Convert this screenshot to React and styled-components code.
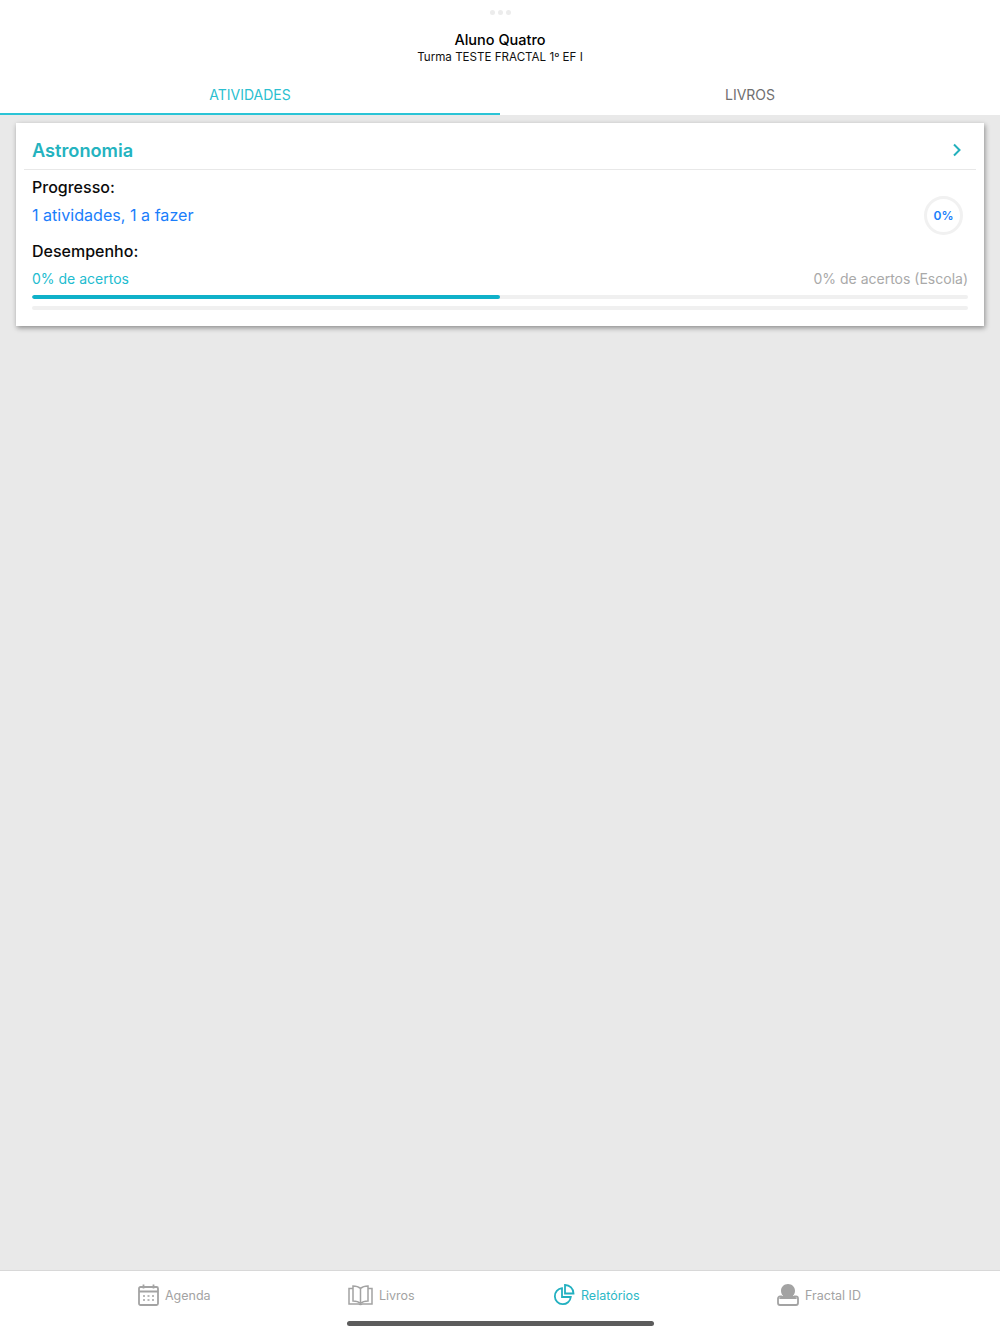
import styled, { createGlobalStyle } from 'styled-components';

const GlobalStyle = createGlobalStyle`
  html, body {
    margin: 0;
    padding: 0;
    background: #e9e9e9;
    font-family: Inter, "Noto Sans", sans-serif;
  }
  * { box-sizing: border-box; }
`;

const Page = styled.div`
  position: relative;
  height: 1334px;
  display: flex;
  flex-direction: column;
  overflow: hidden;
`;

const Header = styled.header`
  background: #fff;
  display: flex;
  flex-direction: column;
  align-items: center;
`;

const Dots = styled.div`
  display: flex;
  gap: 3px;
  padding-top: 10px;
  height: 31px;
`;

const Dot = styled.span`
  width: 5px;
  height: 5px;
  border-radius: 50%;
  background: #ececec;
`;

const Name = styled.div`
  font-size: 14.5px;
  font-weight: 500;
  line-height: 18px;
  color: #000;
`;

const Group = styled.div`
  font-size: 11.6px;
  line-height: 16px;
  color: #111;
  margin-bottom: 8px;
`;

const Tabs = styled.div`
  display: flex;
  width: 100%;
`;

const Tab = styled.div`
  flex: 1;
  height: 42px;
  padding-top: 2px;
  display: flex;
  align-items: center;
  justify-content: center;
  font-size: 14px;
  color: ${(props) => (props.$active ? '#2bbfd0' : '#6f6f6f')};
  border-bottom: 2px solid ${(props) => (props.$active ? '#2bc4d6' : 'transparent')};
`;

const Main = styled.main`
  flex: 1;
  padding: 8px 16px;
`;

const Card = styled.section`
  background: #fff;
  height: 203px;
  padding: 0 8px;
  box-shadow: 1px 2px 5px rgba(0, 0, 0, 0.4);
`;

const CardHeader = styled.div`
  height: 47px;
  display: flex;
  align-items: center;
  justify-content: space-between;
  padding: 7px 14px 0 8px;
  border-bottom: 1px solid #e8e8e8;
`;

const CardTitle = styled.h2`
  margin: 0;
  font-size: 18.2px;
  font-weight: 600;
  color: #24b3bf;
`;

const CardBody = styled.div`
  padding: 7px 8px 0;
`;

const Label = styled.div`
  font-size: 16px;
  font-weight: 500;
  line-height: 20px;
  color: #0b0b0b;
`;

const ProgressRow = styled.div`
  display: flex;
  align-items: center;
  justify-content: space-between;
  height: 36px;
  margin-bottom: 8px;
  padding-right: 5px;
`;

const ProgressText = styled.div`
  font-size: 16.1px;
  color: #1a7efb;
`;

const Ring = styled.div`
  width: 39px;
  height: 39px;
  flex-shrink: 0;
  border-radius: 50%;
  border: 3px solid #f1f1f1;
  display: flex;
  align-items: center;
  justify-content: center;
  font-size: 12px;
  font-weight: 600;
  color: #1a7efb;
`;

const ScoreRow = styled.div`
  display: flex;
  justify-content: space-between;
  align-items: center;
  height: 20px;
  margin-top: 7px;
  font-size: 14px;
`;

const Score = styled.span`
  color: ${(props) => props.color};
`;

const Track = styled.div`
  height: 4px;
  margin-top: ${(props) => props.$top}px;
  border-radius: 2px;
  background: #f0f0f0;
  overflow: hidden;
`;

const Fill = styled.div`
  height: 100%;
  width: ${(props) => props.$value}%;
  border-radius: 2px;
  background: #0fb1c9;
`;

const TabBar = styled.nav`
  height: 64px;
  background: #fff;
  border-top: 1px solid #d8d8d8;
  display: grid;
  grid-template-columns: 210px 205px 224px 1fr;
  padding: 11px 0 0 138px;
  align-items: start;
`;

const BarItem = styled.div`
  display: flex;
  align-items: center;
  gap: 6px;
  height: 26px;
  white-space: nowrap;
  font-size: 12.5px;
  color: ${(props) => (props.$active ? '#2bb8c6' : '#a3a3a3')};
`;

const HomeIndicator = styled.div`
  position: absolute;
  left: 347px;
  bottom: 8px;
  width: 307px;
  height: 5px;
  border-radius: 3px;
  background: #5c5c5c;
`;

const Chevron = () => (
  <svg width="10" height="14" viewBox="0 0 10 14" fill="none" stroke="#22b0bc" strokeWidth="2">
    <path d="M2 1.500 7.500 7 2 12.500" />
  </svg>
);

const CalendarIcon = () => (
  <svg width="21" height="22" viewBox="0 0 21 22" fill="none" stroke="#a3a3a3" strokeWidth="1.8">
    <rect x="1" y="3" width="19" height="18" rx="1.500" />
    <path d="M1 7.500h19" strokeWidth="2" />
    <path d="M5.500 .5v4M15.500 .5v4" />
    <path d="M5 12h2M9.500 12h2M14 12h2M5 16h2M9.500 16h2M14 16h2" strokeWidth="1.500" />
  </svg>
);

const BookIcon = () => (
  <svg width="25" height="21" viewBox="0 0 25 21" fill="none" stroke="#a3a3a3" strokeWidth="1.500">
    <path d="M12.500 3.500C10.500 1.600 8 1 5 1v15c3 0 5.500.6 7.500 2.500 2-1.900 4.500-2.500 7.500-2.500V1c-3 0-5.500.6-7.500 2.500Z" />
    <path d="M12.500 3.500v15" />
    <path d="M5 3.500H1V19h9.500c.8.800 3.200.800 4 0H24V3.500h-4" />
  </svg>
);

const ReportIcon = () => (
  <svg width="22" height="22" viewBox="0 0 22 22" fill="none" stroke="#22b0c0" strokeWidth="1.800">
    <path d="M9 4.200a8 8 0 1 0 8.800 8.800H9Z" />
    <path d="M12 1v8.500h8.500C20.500 4.800 16.700 1 12 1Z" />
  </svg>
);

const PersonIcon = () => (
  <svg width="22" height="22" viewBox="0 0 22 22" fill="none">
    <path d="M5 12.500H3a2 2 0 0 0-2 2V19c0 1.100.9 2 2 2h16c1.100 0 2-.9 2-2v-4.500a2 2 0 0 0-2-2h-2" stroke="#a3a3a3" strokeWidth="1.800" />
    <path d="M11 0c3.900 0 7 2.900 7 6.800 0 2-.7 3.700-2 4.900 1.700.5 3.300 1.600 4 3.300H2c.7-1.700 2.300-2.800 4-3.300-1.300-1.200-2-2.900-2-4.900C4 2.900 7.100 0 11 0Z" fill="#a3a3a3" />
  </svg>
);

const App = () => {
  return (
    <Page>
      <GlobalStyle />
      <Header>
        <Dots>
          <Dot />
          <Dot />
          <Dot />
        </Dots>
        <Name>Aluno Quatro</Name>
        <Group>Turma TESTE FRACTAL 1º EF I</Group>
        <Tabs>
          <Tab $active>ATIVIDADES</Tab>
          <Tab>LIVROS</Tab>
        </Tabs>
      </Header>
      <Main>
        <Card>
          <CardHeader>
            <CardTitle>Astronomia</CardTitle>
            <Chevron />
          </CardHeader>
          <CardBody>
            <Label>Progresso:</Label>
            <ProgressRow>
              <ProgressText>1 atividades, 1 a fazer</ProgressText>
              <Ring>0%</Ring>
            </ProgressRow>
            <Label>Desempenho:</Label>
            <ScoreRow>
              <Score color="#22bccf">0% de acertos</Score>
              <Score color="#a9a9a9">0% de acertos (Escola)</Score>
            </ScoreRow>
            <Track $top={7}>
              <Fill $value={50} />
            </Track>
            <Track $top={7} />
          </CardBody>
        </Card>
      </Main>
      <TabBar>
        <BarItem>
          <CalendarIcon />
          Agenda
        </BarItem>
        <BarItem>
          <BookIcon />
          Livros
        </BarItem>
        <BarItem $active>
          <ReportIcon />
          Relatórios
        </BarItem>
        <BarItem>
          <PersonIcon />
          Fractal ID
        </BarItem>
      </TabBar>
      <HomeIndicator />
    </Page>
  );
};

export default App;
